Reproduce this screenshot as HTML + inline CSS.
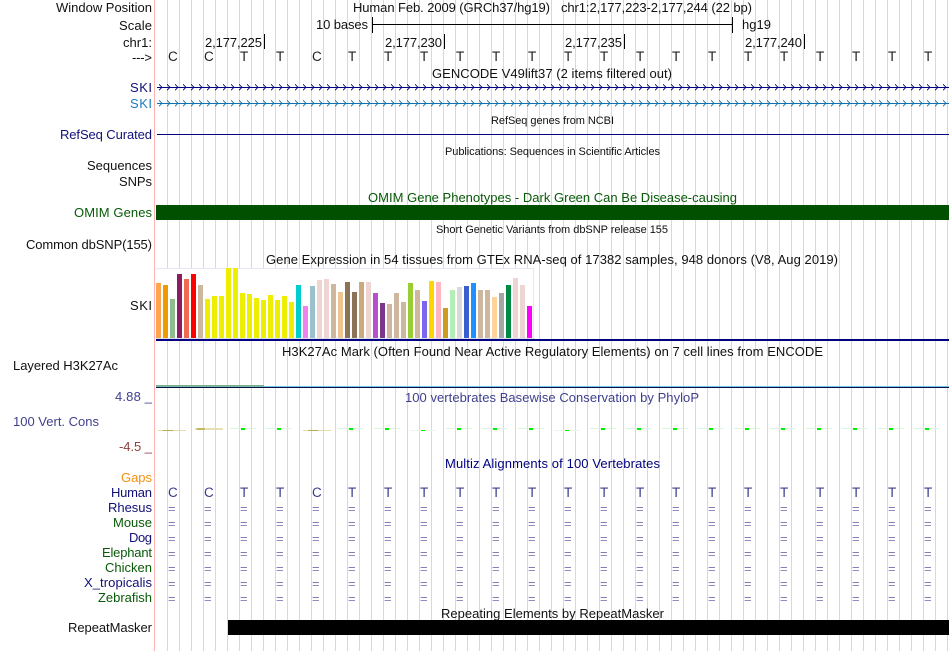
<!DOCTYPE html>
<html>
<head>
<meta charset="utf-8">
<title>Genome Browser</title>
<style>
html,body{margin:0;padding:0;background:#fff;width:950px;height:651px;overflow:hidden}
#grid{position:absolute;left:167px;top:0;width:783px;height:651px;background-image:linear-gradient(to right,#d6d2f8 1px,transparent 1px);background-size:12px 651px;background-position:0 0}
svg{position:absolute;left:0;top:0;display:block}
text{font-family:"Liberation Sans",Arial,sans-serif;font-size:13px;fill:#111}
.l{text-anchor:end}
.s{font-size:11px}
.b{fill:#101078}
.g{fill:#085a08}
.e{fill:#7f7fb8;font-size:13px}
.h{fill:#3c3c8c;font-size:13.5px}
.t{fill:#222;font-size:13.5px}
</style>
</head>
<body>
<div id="grid"></div>
<svg width="950" height="651" viewBox="0 0 950 651" xmlns="http://www.w3.org/2000/svg">
<defs>
<pattern id="ch1" x="159" y="83" width="8" height="9" patternUnits="userSpaceOnUse"><path d="M0 1.3L3 4.3L0 7.3" fill="none" stroke="#000080" stroke-width=".9"/></pattern>
<pattern id="ch2" x="159" y="99" width="8" height="9" patternUnits="userSpaceOnUse"><path d="M0 1.3L3 4.3L0 7.3" fill="none" stroke="#1070b0" stroke-width=".9"/></pattern>
<pattern id="cons" x="230" y="428" width="36" height="3" patternUnits="userSpaceOnUse"><rect x="0" y="0" width="26" height="1" fill="#dcf8dc"/><rect x="11" y="0" width="4" height="2" fill="#00ee00"/></pattern>
</defs>

<rect x="154" y="0" width="1" height="651" fill="#ffb3b3"/>

<!-- labels -->
<text class="l" x="152" y="12" textLength="96">Window Position</text>
<text class="l" x="152" y="30" textLength="33">Scale</text>
<text class="l" x="152" y="47" textLength="29">chr1:</text>
<text class="l" x="152" y="62" textLength="20">---&gt;</text>
<text class="l b" x="152" y="92" textLength="22">SKI</text>
<text class="l" x="152" y="108" textLength="22" style="fill:#1f7cbc">SKI</text>
<text class="l b" x="152" y="139" textLength="92">RefSeq Curated</text>
<text class="l" x="152" y="170" textLength="65">Sequences</text>
<text class="l" x="152" y="186" textLength="33">SNPs</text>
<text class="l g" x="152" y="217" textLength="78">OMIM Genes</text>
<text class="l" x="152" y="249" textLength="126">Common dbSNP(155)</text>
<text class="l" x="152" y="310" textLength="22">SKI</text>
<text x="13" y="370" textLength="105">Layered H3K27Ac</text>
<text class="l" x="152" y="401" textLength="37" style="fill:#40408f">4.88 _</text>
<text x="13" y="426" textLength="86" style="fill:#40408f">100 Vert. Cons</text>
<text class="l" x="152" y="451" textLength="33" style="fill:#8f4040">-4.5 _</text>
<text class="l" x="152" y="482" textLength="31" style="fill:#f5900f">Gaps</text>
<text class="l b" x="152" y="497" textLength="41">Human</text>
<text class="l b" x="152" y="512" textLength="44">Rhesus</text>
<text class="l g" x="152" y="527" textLength="39">Mouse</text>
<text class="l b" x="152" y="542" textLength="23">Dog</text>
<text class="l g" x="152" y="557" textLength="50">Elephant</text>
<text class="l g" x="152" y="572" textLength="47">Chicken</text>
<text class="l b" x="152" y="587" textLength="68">X_tropicalis</text>
<text class="l g" x="152" y="602" textLength="54">Zebrafish</text>
<text class="l" x="152" y="632" textLength="84">RepeatMasker</text>

<!-- header -->
<text x="353" y="12" textLength="197">Human Feb. 2009 (GRCh37/hg19)</text>
<text x="561" y="12" textLength="191">chr1:2,177,223-2,177,244 (22 bp)</text>
<text class="l" x="368" y="29" textLength="52">10 bases</text>
<rect x="372" y="17" width="1" height="16" fill="#000"/>
<rect x="372" y="24" width="361" height="1" fill="#000"/>
<rect x="732" y="17" width="1" height="16" fill="#000"/>
<text x="742" y="29" textLength="29">hg19</text>
<text x="205" y="47" textLength="57">2,177,225</text>
<rect x="264" y="34" width="1" height="15" fill="#000"/>
<text x="385" y="47" textLength="57">2,177,230</text>
<rect x="444" y="34" width="1" height="15" fill="#000"/>
<text x="565" y="47" textLength="57">2,177,235</text>
<rect x="624" y="34" width="1" height="15" fill="#000"/>
<text x="745" y="47" textLength="57">2,177,240</text>
<rect x="804" y="34" width="1" height="15" fill="#000"/>

<text class="t" x="168 204 240 276 312 348 384 420 456 492 528 564 600 636 672 708 744 780 816 852 888 924" y="61">CCTTCTTTTTTTTTTTTTTTTT</text>

<!-- genes -->
<text x="432" y="78" textLength="240">GENCODE V49lift37 (2 items filtered out)</text>
<rect x="157" y="87" width="792" height="1" fill="#000080"/>
<rect x="157" y="83" width="792" height="9" fill="url(#ch1)"/>
<rect x="157" y="103" width="792" height="1" fill="#1070b0"/>
<rect x="157" y="99" width="792" height="9" fill="url(#ch2)"/>
<text class="s" x="491" y="124" textLength="123">RefSeq genes from NCBI</text>
<rect x="157" y="134" width="792" height="1" fill="#000080"/>
<text class="s" x="445" y="155" textLength="215">Publications: Sequences in Scientific Articles</text>
<text class="g" x="368" y="202" textLength="369">OMIM Gene Phenotypes - Dark Green Can Be Disease-causing</text>
<rect x="156" y="205" width="793" height="15" fill="#005000"/>
<text class="s" x="436" y="233" textLength="232">Short Genetic Variants from dbSNP release 155</text>
<text x="266" y="264" textLength="572">Gene Expression in 54 tissues from GTEx RNA-seq of 17382 samples, 948 donors (V8, Aug 2019)</text>

<!-- GTEx -->
<rect x="155" y="268" width="379" height="71" fill="#fff"/>
<rect x="156" y="268" width="378" height="1" fill="#e8e6f6"/>
<rect x="533" y="268" width="1" height="71" fill="#e8e6f6"/>
<rect x="156" y="338" width="378" height="1" fill="#dcdcec"/>
<g>
<rect x="156" y="283" width="5" height="55" fill="#FFA54F"/>
<rect x="163" y="285" width="5" height="53" fill="#EE9A00"/>
<rect x="170" y="299" width="5" height="39" fill="#8FBC8F"/>
<rect x="177" y="274" width="5" height="64" fill="#8B1C62"/>
<rect x="184" y="279" width="5" height="59" fill="#EE6A50"/>
<rect x="191" y="274" width="5" height="64" fill="#FF0000"/>
<rect x="198" y="285" width="5" height="53" fill="#CDB79E"/>
<rect x="205" y="299" width="5" height="39" fill="#EEEE00"/>
<rect x="212" y="296" width="5" height="42" fill="#EEEE00"/>
<rect x="219" y="296" width="5" height="42" fill="#EEEE00"/>
<rect x="226" y="268" width="5" height="70" fill="#EEEE00"/>
<rect x="233" y="268" width="5" height="70" fill="#EEEE00"/>
<rect x="240" y="293" width="5" height="45" fill="#EEEE00"/>
<rect x="247" y="294" width="5" height="44" fill="#EEEE00"/>
<rect x="254" y="298" width="5" height="40" fill="#EEEE00"/>
<rect x="261" y="300" width="5" height="38" fill="#EEEE00"/>
<rect x="268" y="295" width="5" height="43" fill="#EEEE00"/>
<rect x="275" y="300" width="5" height="38" fill="#EEEE00"/>
<rect x="282" y="296" width="5" height="42" fill="#EEEE00"/>
<rect x="289" y="302" width="5" height="36" fill="#EEEE00"/>
<rect x="296" y="285" width="5" height="53" fill="#00CDCD"/>
<rect x="303" y="306" width="5" height="32" fill="#EE82EE"/>
<rect x="310" y="286" width="5" height="52" fill="#9AC0CD"/>
<rect x="317" y="280" width="5" height="58" fill="#EED5D2"/>
<rect x="324" y="279" width="5" height="59" fill="#EED5D2"/>
<rect x="331" y="284" width="5" height="54" fill="#CDB79E"/>
<rect x="338" y="292" width="5" height="46" fill="#EEC591"/>
<rect x="345" y="282" width="5" height="56" fill="#8B7355"/>
<rect x="352" y="292" width="5" height="46" fill="#8B7355"/>
<rect x="359" y="282" width="5" height="56" fill="#CDAA7D"/>
<rect x="366" y="282" width="5" height="56" fill="#EED5D2"/>
<rect x="373" y="293" width="5" height="45" fill="#B452CD"/>
<rect x="380" y="303" width="5" height="35" fill="#7A378B"/>
<rect x="387" y="304" width="5" height="34" fill="#CDB79E"/>
<rect x="394" y="293" width="5" height="45" fill="#CDB79E"/>
<rect x="401" y="302" width="5" height="36" fill="#CDB79E"/>
<rect x="408" y="283" width="5" height="55" fill="#9ACD32"/>
<rect x="415" y="290" width="5" height="48" fill="#CDB79E"/>
<rect x="422" y="301" width="5" height="37" fill="#7A67EE"/>
<rect x="429" y="281" width="5" height="57" fill="#FFD700"/>
<rect x="436" y="282" width="5" height="56" fill="#FFB6C1"/>
<rect x="443" y="308" width="5" height="30" fill="#CD9B1D"/>
<rect x="450" y="290" width="5" height="48" fill="#B4EEB4"/>
<rect x="457" y="287" width="5" height="51" fill="#D9D9D9"/>
<rect x="464" y="286" width="5" height="52" fill="#3A5FCD"/>
<rect x="471" y="283" width="5" height="55" fill="#1E90FF"/>
<rect x="478" y="290" width="5" height="48" fill="#CDB79E"/>
<rect x="485" y="290" width="5" height="48" fill="#CDB79E"/>
<rect x="492" y="297" width="5" height="41" fill="#FFD39B"/>
<rect x="499" y="293" width="5" height="45" fill="#A6A6A6"/>
<rect x="506" y="285" width="5" height="53" fill="#008B45"/>
<rect x="513" y="278" width="5" height="60" fill="#EED5D2"/>
<rect x="520" y="285" width="5" height="53" fill="#EED5D2"/>
<rect x="527" y="306" width="5" height="32" fill="#FF00FF"/>
</g>
<rect x="156" y="339" width="793" height="2" fill="#000080"/>

<!-- H3K27Ac -->
<text x="282" y="356" textLength="541">H3K27Ac Mark (Often Found Near Active Regulatory Elements) on 7 cell lines from ENCODE</text>
<rect x="156" y="385" width="108" height="1" fill="#78b090"/>
<rect x="156" y="386" width="108" height="1" fill="#70b8b0"/>
<rect x="264" y="386" width="685" height="1" fill="#6cc8f0"/>
<rect x="156" y="387" width="793" height="1" fill="#101040"/>

<!-- Conservation -->
<text x="405" y="402" textLength="294" style="fill:#40408f">100 vertebrates Basewise Conservation by PhyloP</text>
<rect x="158" y="430" width="28" height="1" fill="#e2dca8"/>
<rect x="163" y="430" width="10" height="1" fill="#b8ac50"/>
<rect x="195" y="428" width="28" height="2" fill="#e6e0b4"/>
<rect x="197" y="428" width="8" height="2" fill="#c4b860"/>
<rect x="303" y="430" width="28" height="1" fill="#e2dca8"/>
<rect x="308" y="430" width="10" height="1" fill="#b8ac50"/>
<rect x="230" y="428" width="72" height="3" fill="url(#cons)"/>
<rect x="338" y="428" width="72" height="3" fill="url(#cons)"/>
<rect x="410" y="430" width="26" height="1" fill="#e6fae6"/>
<rect x="421" y="430" width="4" height="1" fill="#00ee00"/>
<rect x="446" y="428" width="108" height="3" fill="url(#cons)"/>
<rect x="554" y="430" width="26" height="1" fill="#e6fae6"/>
<rect x="565" y="430" width="4" height="1" fill="#00ee00"/>
<rect x="590" y="428" width="360" height="3" fill="url(#cons)"/>

<!-- Multiz -->
<text x="445" y="468" textLength="215" style="fill:#000080">Multiz Alignments of 100 Vertebrates</text>
<text class="h" x="168 204 240 276 312 348 384 420 456 492 528 564 600 636 672 708 744 780 816 852 888 924" y="497">CCTTCTTTTTTTTTTTTTTTTT</text>
<text class="e" x="168 204 240 276 312 348 384 420 456 492 528 564 600 636 672 708 744 780 816 852 888 924" y="513">======================</text>
<text class="e" x="168 204 240 276 312 348 384 420 456 492 528 564 600 636 672 708 744 780 816 852 888 924" y="528">======================</text>
<text class="e" x="168 204 240 276 312 348 384 420 456 492 528 564 600 636 672 708 744 780 816 852 888 924" y="543">======================</text>
<text class="e" x="168 204 240 276 312 348 384 420 456 492 528 564 600 636 672 708 744 780 816 852 888 924" y="558">======================</text>
<text class="e" x="168 204 240 276 312 348 384 420 456 492 528 564 600 636 672 708 744 780 816 852 888 924" y="573">======================</text>
<text class="e" x="168 204 240 276 312 348 384 420 456 492 528 564 600 636 672 708 744 780 816 852 888 924" y="588">======================</text>
<text class="e" x="168 204 240 276 312 348 384 420 456 492 528 564 600 636 672 708 744 780 816 852 888 924" y="603">======================</text>

<!-- RepeatMasker -->
<text x="441" y="618" textLength="223">Repeating Elements by RepeatMasker</text>
<rect x="228" y="620" width="721" height="15" fill="#000"/>
</svg>
</body>
</html>
